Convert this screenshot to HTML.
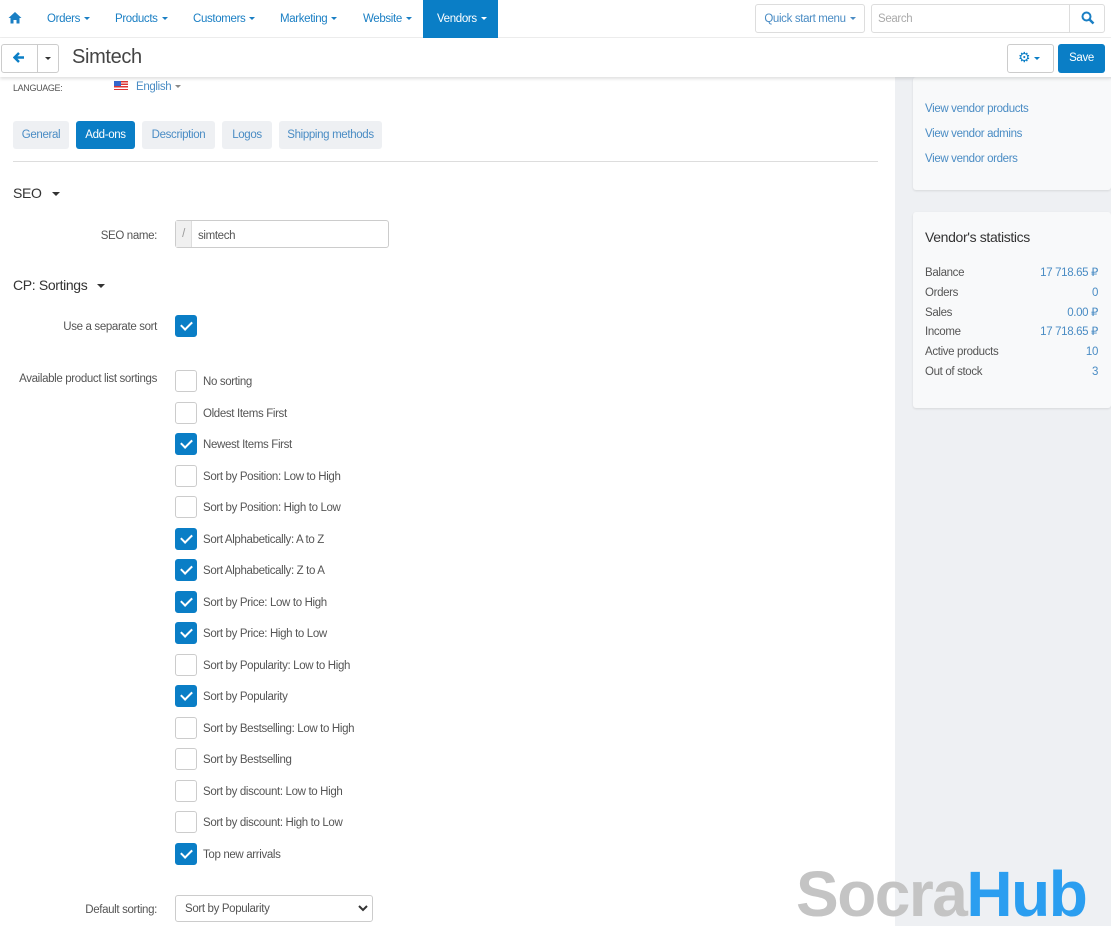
<!DOCTYPE html>
<html><head><meta charset="utf-8"><style>
*{box-sizing:border-box;margin:0;padding:0}
body{width:1111px;height:926px;overflow:hidden;font-family:"Liberation Sans",sans-serif;font-size:11.5px;color:#333;background:#fff;position:relative;letter-spacing:-0.35px}
.a{position:absolute}
.nav{top:0;left:0;width:1111px;height:38px;background:#fff;border-bottom:1px solid #eee}
.nav span{position:absolute;top:13px;color:#1a7fc4}
.car{display:inline-block;width:0;height:0;border-left:3px solid transparent;border-right:3px solid transparent;border-top:3px solid currentColor;vertical-align:middle;margin-left:4px}
.hdr{top:38px;left:0;width:1111px;height:39px;background:#fff;box-shadow:0 2px 3px rgba(0,0,0,.12);z-index:2}
.side{left:895px;top:77px;width:216px;height:849px;background:#eef0f3}
.panel{background:#f8f9fa;border-radius:3px;box-shadow:0 1px 2px rgba(0,0,0,.1)}
.lnk{color:#4a8cc4}
.tab{position:absolute;top:121px;height:28px;background:#eef0f3;border-radius:3px;color:#4a8cc4;line-height:29px;text-align:center}
.cb{position:absolute;left:175px;width:22px;height:22px;border:1px solid #ccc;border-radius:3px;background:#fff}
.cb.on{background:#0a7ec6;border-color:#0a7ec6}
.cb.on:after{content:"";position:absolute;left:7px;top:3px;width:5px;height:9px;border:solid #fff;border-width:0 2.5px 2.5px 0;transform:rotate(45deg)}
.lb{position:absolute;left:203px;color:#555;margin-top:2px}
.fl{position:absolute;color:#555;text-align:right;right:954px;white-space:nowrap;margin-top:2px}
.m2{margin-top:2px}
</style></head><body>
<div class="a nav">
<svg class="a" style="left:8px;top:11px" width="14" height="13" viewBox="0 0 14 13"><path d="M7 1L0.5 7H2.5V12.5H5.5V9H8.5V12.5H11.5V7H13.5Z" fill="#1a7fc4"/></svg>
<span style="left:47px">Orders<i class="car"></i></span>
<span style="left:115px">Products<i class="car"></i></span>
<span style="left:193px">Customers<i class="car"></i></span>
<span style="left:280px">Marketing<i class="car"></i></span>
<span style="left:363px">Website<i class="car"></i></span>
<div class="a" style="left:423px;top:0;width:75px;height:38px;background:#0a7ec6"></div>
<span style="left:437px;color:#fff">Vendors<i class="car"></i></span>
<div class="a" style="left:755px;top:4px;width:110px;height:29px;border:1px solid #ddd;border-radius:3px;color:#4a8cc4;text-align:center;line-height:28px">Quick start menu<i class="car"></i></div>
<div class="a" style="left:871px;top:4px;width:234px;height:29px;border:1px solid #ddd;border-radius:3px;color:#aaa;line-height:28px;padding-left:6px">Search</div>
<div class="a" style="left:1069px;top:4px;width:1px;height:29px;background:#ddd"></div>
<svg class="a" style="left:1081px;top:11px" width="14" height="14" viewBox="0 0 14 14"><circle cx="5.5" cy="5.5" r="4" fill="none" stroke="#1a7fc4" stroke-width="2"/><path d="M8.5 8.5L12.5 12.5" stroke="#1a7fc4" stroke-width="2.5"/></svg>
</div>
<div class="a hdr">
<div class="a" style="left:1px;top:6px;width:58px;height:29px;border:1px solid #ccc;border-radius:3px"></div>
<div class="a" style="left:37px;top:6px;width:1px;height:29px;background:#ccc"></div>
<svg class="a" style="left:13px;top:14px" width="12" height="11" viewBox="0 0 12 11"><path d="M6 1L1.5 5.5L6 10M2 5.5H11" stroke="#0a7ec6" stroke-width="2.4" fill="none"/></svg>
<i class="car a" style="left:41px;top:19px;color:#333"></i>
<div class="a" style="left:72px;top:8px;font-size:20px;color:#444">Simtech</div>
<div class="a" style="left:1007px;top:6px;width:47px;height:29px;border:1px solid #ccc;border-radius:3px"></div>
<div class="a" style="left:1018px;top:11px;color:#0a7ec6;font-size:14px">⚙<i class="car" style="color:#0a7ec6"></i></div>
<div class="a" style="left:1058px;top:6px;width:47px;height:29px;background:#0a7ec6;border-radius:3px;color:#fff;text-align:center;line-height:29px">Save</div>
</div>
<div class="a side"></div>
<div class="a panel" style="left:913px;top:77px;width:198px;height:113px"></div>
<div class="a lnk m2" style="left:925px;top:101px">View vendor products</div>
<div class="a lnk m2" style="left:925px;top:126px">View vendor admins</div>
<div class="a lnk m2" style="left:925px;top:151px">View vendor orders</div>
<div class="a panel" style="left:913px;top:212px;width:198px;height:196px"></div>
<div class="a" style="left:925px;top:229px;font-size:14px;color:#333">Vendor's statistics</div>
<div class="a" style="left:925px;top:264px;width:173px;line-height:19.8px;color:#555">
<div style="display:flex;justify-content:space-between"><span>Balance</span><span class="lnk">17 718.65 ₽</span></div>
<div style="display:flex;justify-content:space-between"><span>Orders</span><span class="lnk">0</span></div>
<div style="display:flex;justify-content:space-between"><span>Sales</span><span class="lnk">0.00 ₽</span></div>
<div style="display:flex;justify-content:space-between"><span>Income</span><span class="lnk">17 718.65 ₽</span></div>
<div style="display:flex;justify-content:space-between"><span>Active products</span><span class="lnk">10</span></div>
<div style="display:flex;justify-content:space-between"><span>Out of stock</span><span class="lnk">3</span></div>
</div>

<div class="a" style="left:13px;top:83px;font-size:9px;color:#555">LANGUAGE:</div>
<div class="a" style="left:114px;top:81px;width:14px;height:9px;background:repeating-linear-gradient(#d33 0 1.3px,#fff 1.3px 2.6px)"><div style="width:7px;height:5px;background:#36c"></div></div>
<div class="a lnk m2" style="left:136px;top:79px">English<i class="car" style="color:#888"></i></div>
<div class="tab" style="left:13px;width:56px">General</div>
<div class="tab" style="left:76px;width:59px;background:#0a7ec6;color:#fff">Add-ons</div>
<div class="tab" style="left:142px;width:73px">Description</div>
<div class="tab" style="left:222px;width:50px">Logos</div>
<div class="tab" style="left:279px;width:103px">Shipping methods</div>
<div class="a" style="left:13px;top:161px;width:865px;height:1px;background:#ddd"></div>
<div class="a" style="left:13px;top:185px;font-size:14px">SEO<i class="car" style="margin-left:10px;border-width:4px 4px 0"></i></div>
<div class="fl" style="top:228px">SEO name:</div>
<div class="a" style="left:175px;top:220px;width:214px;height:28px;border:1px solid #ccc;border-radius:3px"></div>
<div class="a" style="left:176px;top:221px;width:16px;height:26px;background:#f0f0f0;border-right:1px solid #ddd;color:#999;text-align:center;line-height:26px">/</div>
<div class="a m2" style="left:198px;top:228px;color:#555">simtech</div>
<div class="a" style="left:13px;top:277px;font-size:14px">CP: Sortings<i class="car" style="margin-left:10px;border-width:4px 4px 0"></i></div>
<div class="fl" style="top:319px">Use a separate sort</div>
<div class="cb on" style="top:315px"></div>
<div class="fl" style="top:371px">Available product list sortings</div>

<div class="cb" style="top:370px"></div><div class="lb" style="top:374px">No sorting</div>
<div class="cb" style="top:402px"></div><div class="lb" style="top:406px">Oldest Items First</div>
<div class="cb on" style="top:433px"></div><div class="lb" style="top:437px">Newest Items First</div>
<div class="cb" style="top:465px"></div><div class="lb" style="top:469px">Sort by Position: Low to High</div>
<div class="cb" style="top:496px"></div><div class="lb" style="top:500px">Sort by Position: High to Low</div>
<div class="cb on" style="top:528px"></div><div class="lb" style="top:532px">Sort Alphabetically: A to Z</div>
<div class="cb on" style="top:559px"></div><div class="lb" style="top:563px">Sort Alphabetically: Z to A</div>
<div class="cb on" style="top:591px"></div><div class="lb" style="top:595px">Sort by Price: Low to High</div>
<div class="cb on" style="top:622px"></div><div class="lb" style="top:626px">Sort by Price: High to Low</div>
<div class="cb" style="top:654px"></div><div class="lb" style="top:658px">Sort by Popularity: Low to High</div>
<div class="cb on" style="top:685px"></div><div class="lb" style="top:689px">Sort by Popularity</div>
<div class="cb" style="top:717px"></div><div class="lb" style="top:721px">Sort by Bestselling: Low to High</div>
<div class="cb" style="top:748px"></div><div class="lb" style="top:752px">Sort by Bestselling</div>
<div class="cb" style="top:780px"></div><div class="lb" style="top:784px">Sort by discount: Low to High</div>
<div class="cb" style="top:811px"></div><div class="lb" style="top:815px">Sort by discount: High to Low</div>
<div class="cb on" style="top:843px"></div><div class="lb" style="top:847px">Top new arrivals</div>

<div class="fl" style="top:902px">Default sorting:</div>
<div class="a" style="left:175px;top:895px;width:198px;height:27px;border:1px solid #ccc;border-radius:3px;color:#555;line-height:27px;padding-left:9px">Sort by Popularity</div>
<svg class="a" style="left:358px;top:905px" width="10" height="7" viewBox="0 0 10 7"><path d="M1 1L5 5L9 1" stroke="#333" stroke-width="2" fill="none"/></svg>
<div class="a" style="left:796px;top:854px;font-size:64px;font-weight:bold;font-family:'Liberation Sans',sans-serif;letter-spacing:-1.5px;line-height:80px"><span style="color:#c4c4c4">Socra</span><span style="color:#2b9ef0">Hub</span></div>
</body></html>
